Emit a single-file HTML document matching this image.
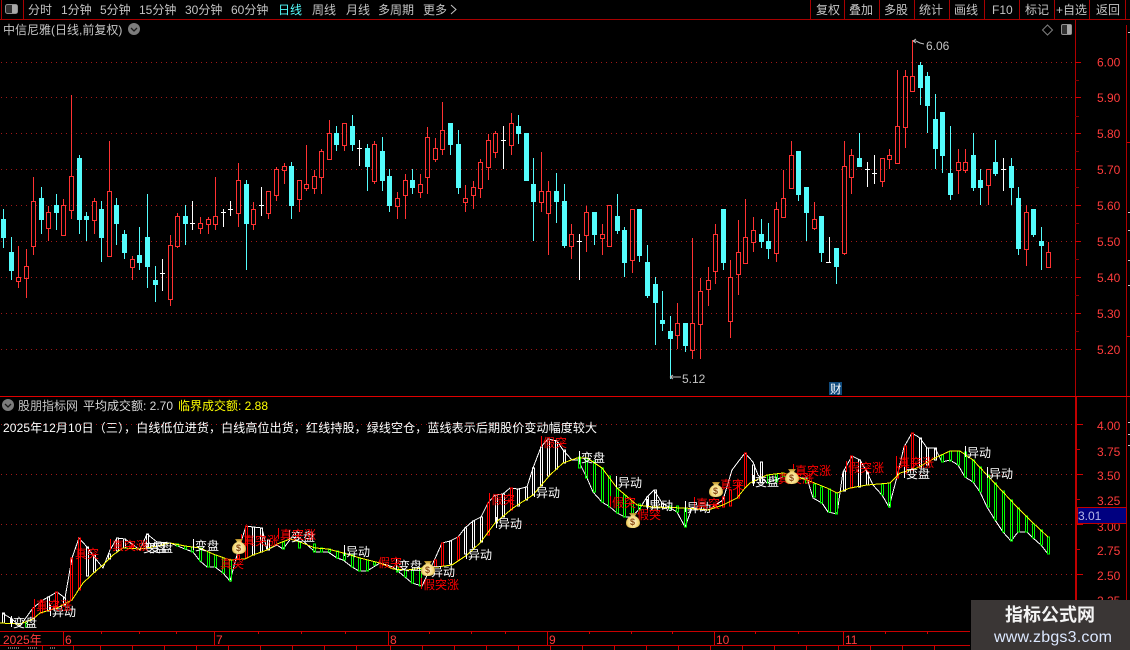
<!DOCTYPE html>
<html><head><meta charset="utf-8"><style>
html,body{margin:0;padding:0;background:#000;width:1130px;height:650px;overflow:hidden}
svg{display:block;position:absolute;left:0;top:0}
text{font-family:"Liberation Sans","WenQuanYi Zen Hei","Noto Sans CJK SC",sans-serif;font-size:12px}
.g{fill:#c4c4c4}.ax{fill:#ff3c3c;font-size:12px}.wl{fill:#fff}.rl{fill:#ff0000}
</style></head><body>
<svg width="1130" height="650" viewBox="0 0 1130 650" xmlns="http://www.w3.org/2000/svg">
<rect width="1130" height="650" fill="#000"/>
<!-- grid -->
<g stroke="#a01818" stroke-width="1" stroke-dasharray="1 4" shape-rendering="crispEdges">
<path d="M1 62.5H1075M1 97.5H1075M1 133.5H1075M1 169.5H1075M1 205.5H1075M1 241.5H1075M1 277.5H1075M1 313.5H1075M1 349.5H1075"/>
<path d="M1 424.5H1075M1 474.5H1075M1 524.5H1075M1 574.5H1075"/>
</g>
<!-- frame -->
<g shape-rendering="crispEdges">
<path d="M0 19.5H1130" stroke="#a80000"/>
<path d="M1.5 0V19M23.5 0V19M810.5 0V19M844.5 0V19M879.5 0V19M914.5 0V19M949.5 0V19M984.5 0V19M1019.5 0V19M1054.5 0V19M1089.5 0V19M1125.5 0V19" stroke="#a80000"/>
<path d="M1075.5 19V396" stroke="#b00000"/>
<path d="M1126.5 25V650" stroke="#b00000"/>
<path d="M0 396.5H1130" stroke="#e00000"/>
<path d="M1076 397V631" stroke="#c00000" stroke-width="2"/>
<path d="M0 631.5H970M0 645.5H970" stroke="#c80000"/>
<path d="M1075 62.5h6M1075 97.5h6M1075 133.5h6M1075 169.5h6M1075 205.5h6M1075 241.5h6M1075 277.5h6M1075 313.5h6M1075 349.5h6" stroke="#d00000"/>
<path d="M1075 80.5h4M1075 116.5h4M1075 151.5h4M1075 187.5h4M1075 223.5h4M1075 259.5h4M1075 295.5h4M1075 331.5h4" stroke="#800000"/>
<path d="M1077 424.5h6M1077 474.5h6M1077 524.5h6M1077 574.5h6M1077 449.5h3M1077 499.5h3M1077 549.5h3" stroke="#d00000"/>
<path d="M1127 142.5h3M1127 336.5h3" stroke="#d00000"/>
<path d="M1128 32.5h2M1128 212.5h2M1128 230.5h2M1128 260.5h2M1128 285.5h2M1128 422.5h2M1128 434.5h2M1128 445.5h2" stroke="#c8c8c8"/>
<path d="M63.5 631V645M214.5 631V645M388.5 631V645M547.5 631V645M714.5 631V645M843.5 631V645" stroke="#d00000"/>
<path d="M101.5 631v3M139.5 631v3M176.5 631v3M258.5 631v3M301.5 631v3M345.5 631v3M429.5 631v3M471.5 631v3M505.5 631v3M589.5 631v3M631.5 631v3M672.5 631v3M755.5 631v3M798.5 631v3M885.5 631v3M927.5 631v3" stroke="#d00000"/>
<path d="M42.5 645v5M73.5 645v5M100.5 645v5M132.5 645v5M164.5 645v5M196.5 645v5M228.5 645v5M260.5 645v5M292.5 645v5M324.5 645v5M356.5 645v5M390.5 645v5M422.5 645v5M454.5 645v5M486.5 645v5M518.5 645v5M550.5 645v5M582.5 645v5M614.5 645v5M646.5 645v5M678.5 645v5M710.5 645v5M742.5 645v5M774.5 645v5M806.5 645v5M838.5 645v5M870.5 645v5M902.5 645v5M934.5 645v5" stroke="#c80000"/>
<path d="M8 648h12M28 648h10M50 648h6" stroke="#cccccc" stroke-dasharray="1 1"/>
</g>
<!-- candles red -->
<path shape-rendering="crispEdges" fill="none" stroke="#ff3232" d="M18.5 246V277M18.5 281V288M16.5 277.5h4V281.5h-4zM26.5 249V266M26.5 278V298M24.5 266.5h4V278.5h-4zM33.5 177V201M33.5 246V255M31.5 201.5h4V246.5h-4zM48.5 206V212M48.5 228V241M46.5 212.5h4V228.5h-4zM63.5 199V205M61.5 205.5h4V235.5h-4zM71.5 95V176M71.5 210V219M69.5 176.5h4V210.5h-4zM94.5 198V201M94.5 220V234M92.5 201.5h4V220.5h-4zM109.5 141V191M107.5 191.5h4V256.5h-4zM132.5 256V259M132.5 267V280M130.5 259.5h4V267.5h-4zM170.5 235V245M170.5 299V306M168.5 245.5h4V299.5h-4zM177.5 213V216M177.5 246V248M175.5 216.5h4V246.5h-4zM200.5 217V223M200.5 228V234M198.5 223.5h4V228.5h-4zM208.5 217V219M208.5 224V234M206.5 219.5h4V224.5h-4zM215.5 177V216M215.5 224V230M213.5 216.5h4V224.5h-4zM238.5 163V180M238.5 213V227M236.5 180.5h4V213.5h-4zM253.5 202V209M253.5 224V230M251.5 209.5h4V224.5h-4zM268.5 213V219M266.5 191.5h4V213.5h-4zM276.5 167V169M276.5 195V201M274.5 169.5h4V195.5h-4zM284.5 163V166M284.5 170V184M282.5 166.5h4V170.5h-4zM299.5 199V212M297.5 180.5h4V199.5h-4zM306.5 145V184M306.5 188V191M304.5 184.5h4V188.5h-4zM314.5 170V176M314.5 188V194M312.5 176.5h4V188.5h-4zM321.5 149V151M321.5 177V194M319.5 151.5h4V177.5h-4zM329.5 120V133M327.5 133.5h4V159.5h-4zM344.5 145V151M342.5 123.5h4V145.5h-4zM374.5 141V144M374.5 181V184M372.5 144.5h4V181.5h-4zM397.5 192V198M397.5 206V219M395.5 198.5h4V206.5h-4zM405.5 174V180M405.5 195V219M403.5 180.5h4V195.5h-4zM420.5 174V184M420.5 192V198M418.5 184.5h4V192.5h-4zM427.5 127V137M427.5 177V194M425.5 137.5h4V177.5h-4zM435.5 138V148M435.5 159V162M433.5 148.5h4V159.5h-4zM442.5 102V130M442.5 149V155M440.5 130.5h4V149.5h-4zM465.5 185V198M465.5 202V212M463.5 198.5h4V202.5h-4zM473.5 181V187M473.5 195V209M471.5 187.5h4V195.5h-4zM480.5 159V162M480.5 188V198M478.5 162.5h4V188.5h-4zM488.5 134V140M488.5 167V180M486.5 140.5h4V167.5h-4zM495.5 131V133M495.5 152V158M493.5 133.5h4V152.5h-4zM511.5 113V123M511.5 145V155M509.5 123.5h4V145.5h-4zM541.5 152V191M541.5 202V212M539.5 191.5h4V202.5h-4zM548.5 181V191M548.5 213V255M546.5 191.5h4V213.5h-4zM571.5 224V234M571.5 246V259M569.5 234.5h4V246.5h-4zM586.5 206V212M586.5 235V252M584.5 212.5h4V235.5h-4zM602.5 224V234M602.5 238V255M600.5 234.5h4V238.5h-4zM607.5 205.5h4V246.5h-4zM632.5 260V273M630.5 209.5h4V260.5h-4zM677.5 303V323M677.5 335V349M675.5 323.5h4V335.5h-4zM692.5 238V323M692.5 350V359M690.5 323.5h4V350.5h-4zM700.5 278V291M700.5 324V359M698.5 291.5h4V324.5h-4zM708.5 267V280M708.5 289V306M706.5 280.5h4V289.5h-4zM715.5 224V234M715.5 271V284M713.5 234.5h4V271.5h-4zM730.5 260V277M730.5 321V338M728.5 277.5h4V321.5h-4zM738.5 220V252M738.5 274V295M736.5 252.5h4V274.5h-4zM745.5 199V237M743.5 237.5h4V263.5h-4zM753.5 217V230M753.5 242V252M751.5 230.5h4V242.5h-4zM776.5 202V209M776.5 253V262M774.5 209.5h4V253.5h-4zM783.5 170V198M781.5 198.5h4V217.5h-4zM791.5 141V155M789.5 155.5h4V188.5h-4zM814.5 202V219M814.5 228V230M812.5 219.5h4V228.5h-4zM844.5 141V166M844.5 253V255M842.5 166.5h4V253.5h-4zM851.5 149V155M851.5 177V194M849.5 155.5h4V177.5h-4zM882.5 181V187M880.5 158.5h4V181.5h-4zM889.5 149V155M889.5 159V169M887.5 155.5h4V159.5h-4zM897.5 70V126M895.5 126.5h4V163.5h-4zM905.5 70V76M905.5 127V148M903.5 76.5h4V127.5h-4zM912.5 40V76M910.5 76.5h4V91.5h-4zM958.5 149V162M958.5 170V194M956.5 162.5h4V170.5h-4zM965.5 149V162M965.5 170V173M963.5 162.5h4V170.5h-4zM988.5 185V205M986.5 169.5h4V185.5h-4zM1026.5 205V212M1026.5 249V266M1024.5 212.5h4V249.5h-4zM1048.5 242V252M1046.5 252.5h4V267.5h-4z"/>
<!-- candles cyan -->
<path shape-rendering="crispEdges" fill="#54fcfc" stroke="#54fcfc" d="M3.5 209V248M1.5 219.5h4V237.5h-4zM11.5 237V280M9.5 252.5h4V270.5h-4zM41.5 187V234M39.5 198.5h4V219.5h-4zM56.5 194V230M54.5 205.5h4V212.5h-4zM79.5 155V234M77.5 158.5h4V219.5h-4zM86.5 212V241M84.5 216.5h4V219.5h-4zM101.5 201V262M99.5 209.5h4V237.5h-4zM116.5 198V245M114.5 205.5h4V223.5h-4zM124.5 230V259M122.5 234.5h4V252.5h-4zM139.5 227V270M137.5 255.5h4V262.5h-4zM147.5 194V288M145.5 237.5h4V266.5h-4zM155.5 266V302M153.5 280.5h4V284.5h-4zM185.5 205V245M183.5 216.5h4V223.5h-4zM246.5 180V270M244.5 184.5h4V223.5h-4zM291.5 162V219M289.5 166.5h4V205.5h-4zM336.5 126V151M334.5 133.5h4V144.5h-4zM352.5 115V151M350.5 126.5h4V144.5h-4zM367.5 144V191M365.5 148.5h4V166.5h-4zM382.5 137V191M380.5 151.5h4V180.5h-4zM389.5 169V212M387.5 176.5h4V205.5h-4zM412.5 169V194M410.5 180.5h4V187.5h-4zM450.5 123V155M448.5 123.5h4V144.5h-4zM458.5 130V194M456.5 144.5h4V187.5h-4zM518.5 115V144M516.5 126.5h4V133.5h-4zM524.5 133.5h4V180.5h-4zM533.5 158V241M531.5 184.5h4V201.5h-4zM556.5 173V223M554.5 191.5h4V201.5h-4zM564.5 184V248M562.5 201.5h4V245.5h-4zM594.5 212V245M592.5 212.5h4V234.5h-4zM617.5 194V234M615.5 216.5h4V230.5h-4zM624.5 227V277M622.5 230.5h4V262.5h-4zM639.5 209V262M637.5 209.5h4V255.5h-4zM647.5 245V298M645.5 262.5h4V295.5h-4zM655.5 277V345M653.5 284.5h4V302.5h-4zM662.5 291V331M660.5 320.5h4V323.5h-4zM670.5 316V379M668.5 331.5h4V338.5h-4zM685.5 323V352M683.5 323.5h4V345.5h-4zM723.5 209V270M721.5 209.5h4V262.5h-4zM761.5 219V248M759.5 234.5h4V241.5h-4zM768.5 223V259M766.5 241.5h4V248.5h-4zM798.5 151V201M796.5 151.5h4V194.5h-4zM806.5 187V241M804.5 187.5h4V212.5h-4zM821.5 216V262M819.5 216.5h4V252.5h-4zM836.5 248V284M834.5 248.5h4V266.5h-4zM859.5 133V166M857.5 158.5h4V166.5h-4zM920.5 62V105M918.5 65.5h4V87.5h-4zM927.5 72V133M925.5 76.5h4V105.5h-4zM935.5 94V169M933.5 119.5h4V148.5h-4zM942.5 112V173M940.5 112.5h4V155.5h-4zM950.5 126V200M948.5 173.5h4V194.5h-4zM973.5 133V191M971.5 155.5h4V187.5h-4zM980.5 169V205M978.5 180.5h4V187.5h-4zM995.5 140V176M993.5 162.5h4V173.5h-4zM1011.5 158V205M1009.5 166.5h4V187.5h-4zM1018.5 187V255M1016.5 198.5h4V248.5h-4zM1033.5 209V237M1031.5 209.5h4V234.5h-4zM1041.5 227V270M1039.5 241.5h4V245.5h-4z"/>
<!-- doji white -->
<path shape-rendering="crispEdges" fill="none" stroke="#fff" d="M162.5 259V291M160 273.5h5M192.5 201V230M190 223.5h5M223.5 209V227M221 212.5h5M230.5 201V216M228 209.5h5M261.5 187V216M259 205.5h5M359.5 140V166M357 148.5h5M503.5 126V169M501 140.5h5M579.5 234V280M577 241.5h5M829.5 237V263M826 262.5h5M867.5 162V187M865 169.5h5M874.5 155V184M872 173.5h5M1003.5 158V191M1001 169.5h5"/>
<!-- 6.06 / 5.12 markers -->
<path fill="none" stroke="#c0c0c0" d="M913 41h3M913 41l3-2M913 41l3 2M916 41l4 2 4 1"/>
<path fill="none" stroke="#c0c0c0" d="M670 377h11M670 377l3-2M670 377l3 2"/>
<text x="926" y="50" class="g">6.06</text>
<text x="682" y="383" class="g">5.12</text>
<!-- indicator white polyline -->
<polyline shape-rendering="crispEdges" fill="none" stroke="#fff" points="2,613 12,619 20,626 33,608 43,600 57,592 65,598 72,558 79,538 87,547 95,558 103,568 110,550 117,538 125,539 140,550 147,534 157,542 170,543 185,549 193,552 200,561 207,567 215,567 223,573 230,581 237,555 246,526 253,527 262,528 267,550 277,545 283,549 292,537 300,538 315,552 328,552 337,558 343,560 352,567 359,571 367,571 380,563 393,567 405,577 412,583 422,586 433,563 442,543 450,541 458,537 465,528 473,521 481,517 488,503 495,495 503,494 510,488 518,489 527,487 533,468 541,447 548,439 557,441 563,450 572,460 578,460 587,478 593,492 602,502 610,507 617,513 625,517 632,517 640,508 647,497 654,490 662,503 677,512 685,527 692,508 708,510 723,500 732,470 738,462 745,453 753,462 758,475 767,483 783,477 807,478 813,498 822,503 828,512 837,514 843,472 852,456 860,460 867,472 873,485 882,495 889,507 897,477 904,447 912,433 920,438 927,448 935,448 942,462 950,460 958,465 965,477 973,482 980,492 987,507 995,520 1003,532 1011,541 1018,532 1027,532 1033,538 1041,545 1048,554"/>
<!-- indicator bars -->
<g transform="translate(1,0)">
<path shape-rendering="crispEdges" fill="none" stroke="#fff" d="M1.5 613h2V623h-2zM9.500 619h2V623h-2zM46.500 597h2V611h-2zM62.500 598h2V605h-2zM85.500 547h2V576h-2zM92.500 555h2V572h-2zM107.500 554h2V559h-2zM115.500 538h2V551h-2zM122.500 539h2V548h-2zM145.500 534h2V548h-2zM153.500 543h2V547h-2zM160.500 543h2V545h-2zM251.500 527h2V555h-2zM259.500 528h2V552h-2zM266.500 540h2V550h-2zM425.500 568h2V575h-2zM448.500 541h2V564h-2zM463.500 528h2V554h-2zM471.500 521h2V548h-2zM479.500 517h2V542h-2zM494.500 495h2V523h-2zM501.500 494h2V517h-2zM516.500 489h2V506h-2zM524.500 487h2V500h-2zM531.500 468h2V495h-2zM539.500 447h2V486h-2zM546.500 439h2V476h-2zM554.500 441h2V469h-2zM562.500 450h2V463h-2zM645.500 497h2V507h-2zM653.500 490h2V507h-2zM660.500 503h2V507h-2zM751.500 465h2V483h-2zM759.500 462h2V483h-2zM842.500 471h2V491h-2zM857.500 460h2V487h-2zM865.500 472h2V485h-2zM918.500 438h2V468h-2zM925.500 448h2V465h-2zM933.500 448h2V460h-2z"/>
<path shape-rendering="crispEdges" fill="none" stroke="#00ff00" d="M24.500 623h2V627h-2zM175.500 544h2V546h-2zM183.500 546h2V549h-2zM190.500 547h2V552h-2zM198.500 548h2V561h-2zM206.500 552h2V567h-2zM213.500 555h2V567h-2zM221.500 558h2V573h-2zM228.500 560h2V581h-2zM281.500 542h2V549h-2zM297.500 542h2V548h-2zM312.500 544h2V552h-2zM319.500 548h2V552h-2zM327.500 549h2V552h-2zM335.500 551h2V558h-2zM342.500 553h2V560h-2zM350.500 555h2V567h-2zM357.500 558h2V571h-2zM365.500 560h2V571h-2zM372.500 562h2V565h-2zM395.500 567h2V572h-2zM403.500 570h2V577h-2zM410.500 570h2V583h-2zM418.500 569h2V586h-2zM577.500 457h2V468h-2zM584.500 458h2V478h-2zM592.500 461h2V492h-2zM600.500 468h2V502h-2zM607.500 476h2V507h-2zM615.500 488h2V513h-2zM622.500 495h2V517h-2zM630.500 501h2V517h-2zM637.500 504h2V510h-2zM668.500 506h2V509h-2zM675.500 506h2V512h-2zM683.500 508h2V527h-2zM766.500 475h2V483h-2zM774.500 474h2V482h-2zM781.500 473h2V477h-2zM804.500 479h2V483h-2zM812.500 484h2V497h-2zM819.500 487h2V503h-2zM827.500 489h2V512h-2zM834.500 493h2V514h-2zM880.500 484h2V495h-2zM887.500 483h2V507h-2zM940.500 455h2V462h-2zM948.500 451h2V461h-2zM956.500 451h2V465h-2zM963.500 452h2V477h-2zM971.500 460h2V482h-2zM978.500 467h2V492h-2zM986.500 475h2V507h-2zM993.500 483h2V520h-2zM1001.500 491h2V532h-2zM1009.500 500h2V541h-2zM1016.500 508h2V532h-2zM1024.500 516h2V532h-2zM1031.500 524h2V538h-2zM1039.500 530h2V545h-2zM1046.500 537h2V554h-2z"/>
<path shape-rendering="crispEdges" fill="none" stroke="#ff0000" d="M31.500 608h2V619h-2zM39.500 600h2V613h-2zM54.500 592h2V608h-2zM69.500 558h2V600h-2zM77.500 538h2V590h-2zM130.500 545h2V548h-2zM236.500 555h2V559h-2zM244.500 526h2V558h-2zM433.500 560h2V567h-2zM440.500 543h2V566h-2zM456.500 537h2V560h-2zM486.500 503h2V535h-2zM509.500 488h2V510h-2zM713.500 505h2V508h-2zM721.500 497h2V507h-2zM728.500 490h2V506h-2zM736.500 482h2V498h-2zM743.500 453h2V487h-2zM849.500 456h2V488h-2zM895.500 467h2V478h-2zM903.500 446h2V473h-2zM910.500 433h2V470h-2z"/>
</g>
<!-- yellow line -->
<polyline shape-rendering="crispEdges" fill="none" stroke="#ffff00" points="0,623 20,624 33,619 40,613 57,608 72,600 83,583 97,570 103,565 113,555 123,548 140,549 153,547 170,543 185,546 200,548 213,554 230,560 245,559 253,555 267,550 277,544 290,539 300,542 315,548 328,549 347,554 360,558 380,563 393,569 407,570 423,568 437,567 452,565 467,555 480,543 495,523 513,508 533,495 550,475 563,463 577,458 587,458 602,468 617,488 637,505 653,507 685,508 708,510 723,505 737,498 745,488 750,483 767,475 783,473 807,480 827,488 837,493 850,488 867,485 890,483 900,473 917,468 937,457 950,451 960,451 973,460 987,475 1003,492 1017,507 1030,520 1048,537"/>
<!-- label ticks -->
<path shape-rendering="crispEdges" fill="none" stroke="#fff" d="M11.500 616v11M50.500 605v11M193.500 539v11M289.500 530v11M344.500 545v11M396.500 559v11M466.500 548v11M496.500 517v11M534.500 486v11M579.500 451v11M616.500 476v11M647.500 499v11M685.500 501v11M753.500 475v11M904.500 467v11M965.500 446v11M987.500 467v11"/>
<path shape-rendering="crispEdges" fill="none" stroke="#ff0000" d="M34.500 599v11M110.500 539v11M241.500 534v11M278.500 528v11M421.500 578v11M489.500 493v11M541.500 436v11M610.500 496v11M694.500 497v11M793.500 464v11M846.500 461v11M896.500 456v11"/>
<!-- indicator labels white -->
<g class="wl">
<text x="13" y="627" class="wl">变盘</text><text x="52" y="616" class="wl">异动</text>
<text x="143" y="552" class="wl">变盘</text><text x="149" y="552" class="wl">变盘</text>
<text x="195" y="550" class="wl">变盘</text><text x="291" y="541" class="wl">变盘</text>
<text x="346" y="556" class="wl">异动</text><text x="398" y="570" class="wl">变盘</text>
<text x="431" y="576" class="wl">异动</text><text x="468" y="559" class="wl">异动</text>
<text x="498" y="528" class="wl">异动</text><text x="536" y="497" class="wl">异动</text>
<text x="581" y="462" class="wl">变盘</text><text x="618" y="487" class="wl">异动</text>
<text x="649" y="510" class="wl">异动</text><text x="687" y="512" class="wl">异动</text>
<text x="755" y="486" class="wl">变盘</text><text x="906" y="478" class="wl">变盘</text>
<text x="967" y="457" class="wl">异动</text><text x="989" y="478" class="wl">异动</text>
</g>
<!-- indicator labels red -->
<g>
<text x="36" y="610" class="rl">真突涨</text><text x="75" y="558" class="rl">真突</text>
<text x="112" y="550" class="rl">真突涨</text><text x="220" y="568" class="rl">真突</text>
<text x="243" y="545" class="rl">真突涨</text><text x="280" y="539" class="rl">真突涨</text>
<text x="378" y="567" class="rl">假突</text><text x="423" y="589" class="rl">假突涨</text>
<text x="491" y="504" class="rl">假突</text><text x="543" y="447" class="rl">假突</text>
<text x="612" y="507" class="rl">假突</text><text x="637" y="519" class="rl">假突</text>
<text x="696" y="508" class="rl">真突</text><text x="720" y="489" class="rl">真突</text>
<text x="778" y="483" class="rl">真突涨</text><text x="795" y="475" class="rl">真突涨</text>
<text x="848" y="472" class="rl">假突涨</text><text x="898" y="467" class="rl">真突涨</text>
</g>
<!-- money bags -->
<defs><radialGradient id="b" cx=".5" cy=".6" r=".6"><stop offset="0" stop-color="#fff8d8"/><stop offset=".65" stop-color="#f4d878"/><stop offset="1" stop-color="#b08820"/></radialGradient></defs>
<g><path d="M235 539h8l-2 3c3 1 5 4 5 7 0 3-3 5-7 5h-1c-4 0-6-2-6-5 0-3 2-6 5-7z" fill="url(#b)"/><text x="236" y="551" style="font-size:9px;font-weight:bold" fill="#8a4a10">$</text></g>
<g><path d="M424 561h8l-2 3c3 1 5 4 5 7 0 3-3 5-7 5h-1c-4 0-6-2-6-5 0-3 2-6 5-7z" fill="url(#b)"/><text x="425" y="573" style="font-size:9px;font-weight:bold" fill="#8a4a10">$</text></g>
<g><path d="M629 513h8l-2 3c3 1 5 4 5 7 0 3-3 5-7 5h-1c-4 0-6-2-6-5 0-3 2-6 5-7z" fill="url(#b)"/><text x="630" y="525" style="font-size:9px;font-weight:bold" fill="#8a4a10">$</text></g>
<g><path d="M712 482h8l-2 3c3 1 5 4 5 7 0 3-3 5-7 5h-1c-4 0-6-2-6-5 0-3 2-6 5-7z" fill="url(#b)"/><text x="713" y="494" style="font-size:9px;font-weight:bold" fill="#8a4a10">$</text></g>
<g><path d="M788 469h8l-2 3c3 1 5 4 5 7 0 3-3 5-7 5h-1c-4 0-6-2-6-5 0-3 2-6 5-7z" fill="url(#b)"/><text x="789" y="481" style="font-size:9px;font-weight:bold" fill="#8a4a10">$</text></g>
<!-- toolbar -->
<rect x="5.5" y="4.5" width="12" height="9" rx="2" fill="#303030" stroke="#909090"/><rect x="12" y="5" width="5" height="8" fill="#a8a8a8"/>
<g>
<text x="28" y="14" class="g">分时</text><text x="61" y="14" class="g">1分钟</text><text x="100" y="14" class="g">5分钟</text>
<text x="139" y="14" class="g">15分钟</text><text x="185" y="14" class="g">30分钟</text><text x="231" y="14" class="g">60分钟</text>
<text x="278" y="14" fill="#54fcfc">日线</text><text x="312" y="14" class="g">周线</text><text x="346" y="14" class="g">月线</text>
<text x="378" y="14" class="g">多周期</text><text x="423" y="14" class="g">更多</text>
<path d="M451 5l5 4.500-5 4.500" fill="none" stroke="#c4c4c4"/>
<text x="816" y="14" class="g">复权</text><text x="849" y="14" class="g">叠加</text><text x="884" y="14" class="g">多股</text>
<text x="919" y="14" class="g">统计</text><text x="954" y="14" class="g">画线</text><text x="992" y="14" class="g">F10</text>
<text x="1025" y="14" class="g">标记</text><text x="1056" y="14" class="g">+自选</text><text x="1096" y="14" class="g">返回</text>
</g>
<!-- title -->
<text x="3" y="34" class="g">中信尼雅(日线,前复权)</text>
<circle cx="134" cy="29" r="6" fill="#7c7c7c"/><path d="M131 28l3 3 3-3" fill="none" stroke="#1a1a1a" stroke-width="1.300"/>
<path d="M1047.500 25l5 5-5 5-5-5z" fill="none" stroke="#808080"/>
<rect x="1061.500" y="24.500" width="10" height="10" rx="1.500" fill="#303030" stroke="#909090"/><rect x="1067" y="25" width="4" height="9" fill="#a8a8a8"/>
<!-- cai icon -->
<rect x="829" y="382" width="13" height="13" fill="#0f4a7c"/><text x="830" y="393" fill="#fff" style="font-size:11.500px">财</text>
<!-- axis labels -->
<g>
<text x="1097" y="66.500" class="ax">6.00</text><text x="1097" y="102" class="ax">5.90</text><text x="1097" y="138" class="ax">5.80</text>
<text x="1097" y="174" class="ax">5.70</text><text x="1097" y="210" class="ax">5.60</text><text x="1097" y="246" class="ax">5.50</text>
<text x="1097" y="282" class="ax">5.40</text><text x="1097" y="318" class="ax">5.30</text><text x="1097" y="354" class="ax">5.20</text>
<text x="1097" y="430" class="ax">4.00</text><text x="1097" y="456" class="ax">3.75</text><text x="1097" y="480" class="ax">3.50</text>
<text x="1097" y="505" class="ax">3.25</text><text x="1097" y="531" class="ax">3.00</text><text x="1097" y="555" class="ax">2.75</text>
<text x="1097" y="580" class="ax">2.50</text><text x="1097" y="605" class="ax">2.25</text>
</g>
<rect x="1077.500" y="507.500" width="49" height="16" fill="#000080" stroke="#c00000"/>
<text x="1078" y="520" fill="#b8b8e8">3.01</text>
<!-- panel header -->
<circle cx="8" cy="405" r="6" fill="#7c7c7c"/><path d="M5 404l3 3 3-3" fill="none" stroke="#1a1a1a" stroke-width="1.300"/>
<text x="18" y="410" class="g">股朋指标网</text>
<text x="83" y="410" fill="#d8d8d8">平均成交额: 2.70</text>
<text x="178" y="410" fill="#ffff00" textLength="90">临界成交额: 2.88</text>
<text x="3" y="432" fill="#fff" textLength="594">2025年12月10日（三），白线低位进货，白线高位出货，红线持股，绿线空仓，蓝线表示后期股价变动幅度较大</text>
<!-- time axis -->
<g>
<text x="3" y="644" class="ax">2025年</text><text x="65" y="644" class="ax">6</text><text x="216" y="644" class="ax">7</text>
<text x="390" y="644" class="ax">8</text><text x="549" y="644" class="ax">9</text><text x="716" y="644" class="ax">10</text><text x="845" y="644" class="ax">11</text>
</g>
<!-- watermark -->
<rect x="971" y="600" width="159" height="50" fill="#3a3635"/>
<text x="1005" y="621" fill="#f4f4f4" style="font-size:18px;font-weight:bold">指标公式网</text>
<text x="994" y="642" fill="#dce8ff" style="font-size:16px" textLength="118">www.zbgs3.com</text>
</svg>
</body></html>
